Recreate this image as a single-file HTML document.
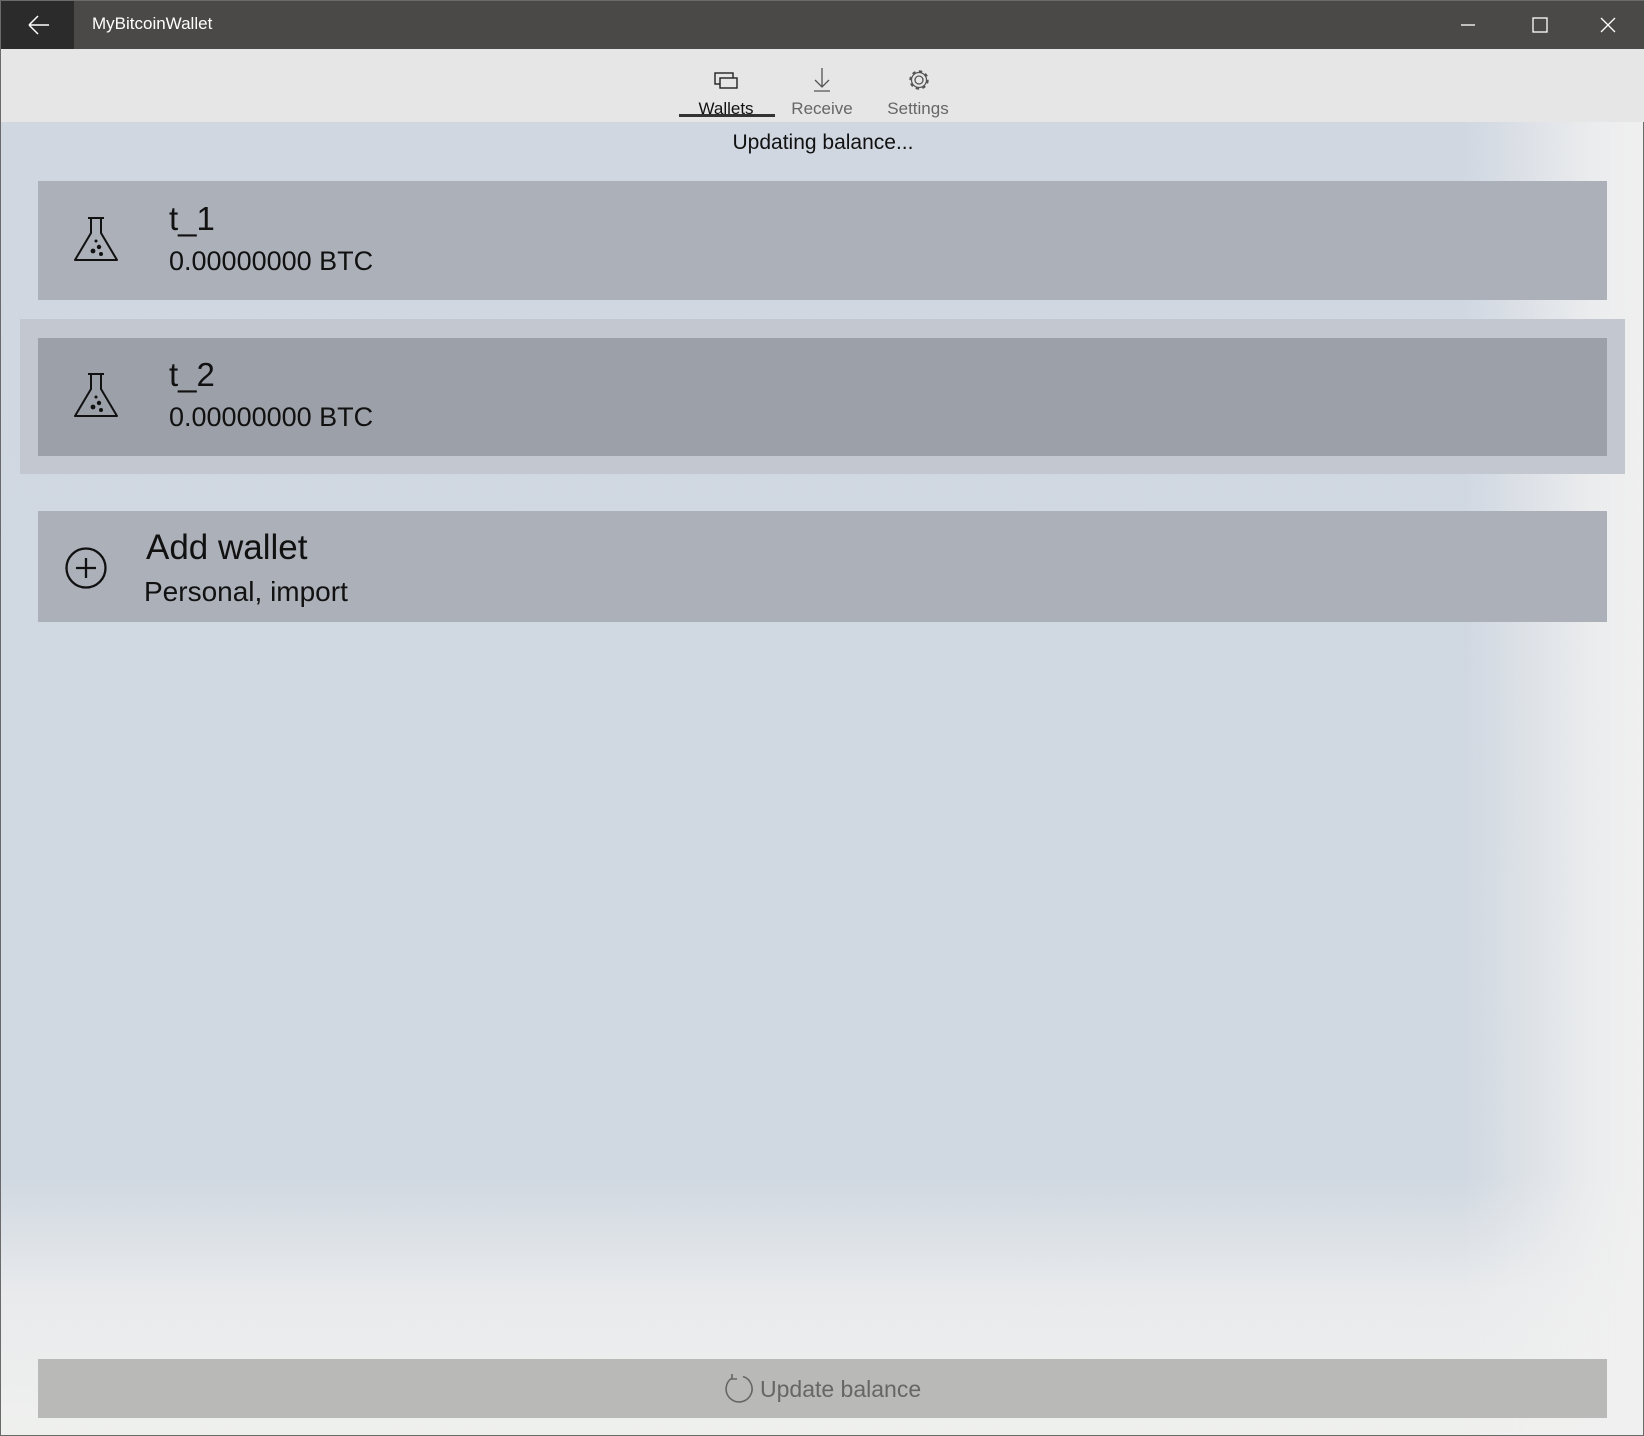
<!DOCTYPE html>
<html><head><meta charset="utf-8"><style>
*{margin:0;padding:0;box-sizing:border-box}
body{width:1644px;height:1436px;position:relative;overflow:hidden;font-family:"Segoe UI","Liberation Sans","DejaVu Sans",sans-serif;border:1px solid #6a6a6a;
background:linear-gradient(90deg,rgba(255,255,255,0) 0,rgba(255,255,255,0) 89%,rgba(240,240,240,.85) 97%,#f0f0f0 100%),linear-gradient(180deg,#d0d7e1 0,#d0d8e1 82%,#e8eaec 90%,#eff0ee 100%);}
.abs{position:absolute}
.title{left:0;top:0;width:1644px;height:48px;background:#4a4948;color:#fff}
.back{left:0;top:0;width:73px;height:48px;background:#2b2b2b}
.tabs{left:0;top:48px;width:1644px;height:73px;background:#e6e6e6}
.tab{font-size:17px;color:#666;transform:translateX(-50%);top:98px}
.card{left:37px;width:1569px;background:#abb0b9}
.n{font-size:33px;color:#111;left:168px}
.b{font-size:27px;color:#111;left:168px}
</style></head><body>
<div class="abs title"></div>
<div class="abs back"><svg width="73" height="48"><path d="M28 24h20M28 24l9-9M28 24l9 9" stroke="#fff" stroke-width="1.5" fill="none"/></svg></div>
<div class="abs" style="left:91px;top:13px;color:#fff;font-size:17px">MyBitcoinWallet</div>
<svg class="abs" style="left:1440px;top:0" width="204" height="48"><path d="M20 24h14" stroke="#fff" stroke-width="1.3"/><rect x="92" y="17" width="14" height="14" stroke="#fff" fill="none" stroke-width="1.3"/><path d="M160 17l14 14M174 17l-14 14" stroke="#fff" stroke-width="1.3"/></svg>
<div class="abs tabs"></div>
<svg class="abs" style="left:712px;top:70px" width="28" height="20"><rect x="2" y="2" width="18" height="11" fill="none" stroke="#222" stroke-width="1.4"/><rect x="7" y="7" width="17" height="10" fill="#e6e6e6" stroke="#222" stroke-width="1.4"/></svg>
<svg class="abs" style="left:810px;top:66px" width="22" height="26"><path d="M11 1v19M4 13l7 7 7-7M3 24h16" stroke="#555" stroke-width="1.3" fill="none"/></svg>
<svg class="abs" style="left:905px;top:66px" width="26" height="26"><circle cx="13" cy="13" r="4" fill="none" stroke="#555" stroke-width="1.3"/><circle cx="13" cy="13" r="8.5" fill="none" stroke="#555" stroke-width="2.4" stroke-dasharray="3.3 3.3"/><circle cx="13" cy="13" r="7.5" fill="none" stroke="#555" stroke-width="1.2"/></svg>
<div class="abs tab" style="left:725px;color:#111">Wallets</div>
<div class="abs tab" style="left:821px">Receive</div>
<div class="abs tab" style="left:917px">Settings</div>
<div class="abs" style="left:678px;top:113px;width:96px;height:3px;background:#333"></div>
<div class="abs" style="left:0;width:1644px;text-align:center;top:130px;font-size:21px;color:#111">Updating balance...</div>

<div class="abs card" style="top:180px;height:119px"></div>
<div class="abs" style="left:19px;top:318px;width:1605px;height:155px;background:#c3c8d0"></div>
<div class="abs card" style="top:337px;height:118px;background:#9ca0a8"></div>
<div class="abs card" style="top:510px;height:111px"></div>

<svg class="abs" style="left:70px;top:214px" width="52" height="52"><path d="M17 3h16M20 3v15L4 45h42L30 18V3" fill="none" stroke="#111" stroke-width="2" stroke-linejoin="round"/><circle cx="22" cy="36" r="2.4" fill="#111"/><circle cx="28" cy="32" r="2.2" fill="#111"/><circle cx="30" cy="39" r="2" fill="#111"/><circle cx="25" cy="26" r="1.5" fill="#111"/></svg>
<div class="abs n" style="top:199px">t_1</div>
<div class="abs b" style="top:245px">0.00000000 BTC</div>
<svg class="abs" style="left:70px;top:370px" width="52" height="52"><path d="M17 3h16M20 3v15L4 45h42L30 18V3" fill="none" stroke="#111" stroke-width="2" stroke-linejoin="round"/><circle cx="22" cy="36" r="2.4" fill="#111"/><circle cx="28" cy="32" r="2.2" fill="#111"/><circle cx="30" cy="39" r="2" fill="#111"/><circle cx="25" cy="26" r="1.5" fill="#111"/></svg>
<div class="abs n" style="top:355px">t_2</div>
<div class="abs b" style="top:401px">0.00000000 BTC</div>

<svg class="abs" style="left:63px;top:545px" width="44" height="44"><circle cx="22" cy="22" r="19.5" fill="none" stroke="#111" stroke-width="2.3"/><path d="M22 12v20M12 22h20" stroke="#111" stroke-width="2.3"/></svg>
<div class="abs" style="left:145px;top:527px;font-size:35px;color:#111">Add wallet</div>
<div class="abs" style="left:143px;top:575px;font-size:28px;color:#111">Personal, import</div>

<div class="abs" style="left:37px;top:1358px;width:1569px;height:59px;background:#b9bab8"></div>
<svg class="abs" style="left:722px;top:1372px" width="32" height="32"><path d="M20 3.5A13 13 0 1 1 9 5" fill="none" stroke="#666" stroke-width="1.6"/><path d="M9 1v5h5" fill="none" stroke="#666" stroke-width="1.6"/></svg>
<div class="abs" style="left:759px;top:1375px;font-size:23px;color:#666">Update balance</div>
</body></html>
